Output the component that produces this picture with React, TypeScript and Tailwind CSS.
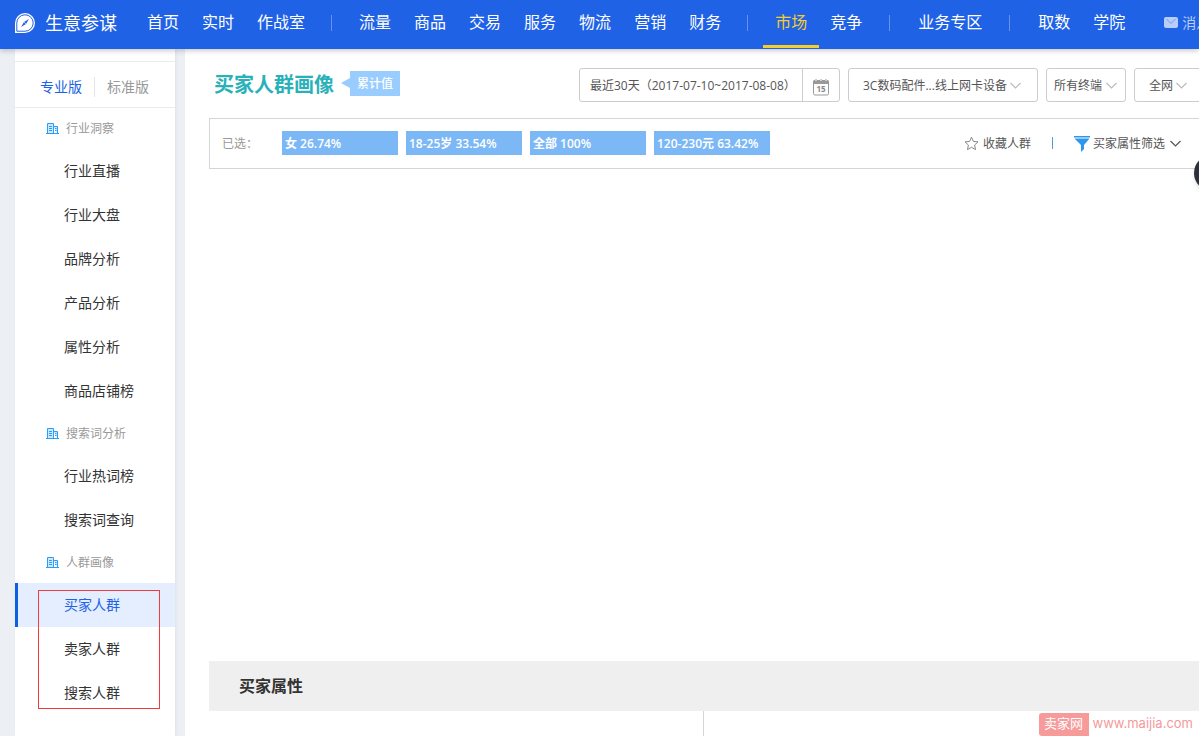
import type { ReactNode } from 'react';

type Group = { title: string; items: string[] };

const nav: { items: string[]; gap: string }[] = [
  { items: ['首页', '实时', '作战室'], gap: '' },
  { items: ['流量', '商品', '交易', '服务', '物流', '营销', '财务'], gap: 'mx-[15px]' },
  { items: ['市场', '竞争'], gap: 'mx-[15px]' },
  { items: ['业务专区'], gap: 'mx-4' },
  { items: ['取数', '学院'], gap: 'mx-4' },
];

const groups: Group[] = [
  { title: '行业洞察', items: ['行业直播', '行业大盘', '品牌分析', '产品分析', '属性分析', '商品店铺榜'] },
  { title: '搜索词分析', items: ['行业热词榜', '搜索词查询'] },
  { title: '人群画像', items: ['买家人群', '卖家人群', '搜索人群'] },
];

const chips = ['女 26.74%', '18-25岁 33.54%', '全部 100%', '120-230元 63.42%'];

function Logo() {
  return (
    <svg width="22" height="22" viewBox="0 0 22 22" className="shrink-0" aria-hidden="true">
      <path d="M1 21V11A10 10 0 1 1 11 21Z" fill="#fff" />
      <path d="M2.8 19.2V11A8.2 8.2 0 1 1 11 19.2Z" fill="none" stroke="#2062e6" strokeWidth="1" />
      <path d="M15 7 12 12 7 15 10 10Z" fill="#2062e6" />
      <path d="m10.4 10.4 1.2 1.2" stroke="#fff" />
    </svg>
  );
}

function BuildingIcon() {
  return (
    <svg width="13" height="12" viewBox="0 0 13 12" fill="none" stroke="#2a9dfa" aria-hidden="true">
      <path d="M1.5 10.5V.5h6v10" fill="#cfe8ff" />
      <path d="M7.5 3.5h4v7" fill="#cfe8ff" />
      <path d="M0 10.5h13M3 3.5h3M3 5.5h3M3 7.5h3M9 5.5h1.5M9 7.5h1.5" />
    </svg>
  );
}

function Chevron({ className = '' }: { className?: string }) {
  return (
    <svg width="11" height="7" viewBox="0 0 11 7" fill="none" stroke="currentColor" strokeWidth="1.2" className={className} aria-hidden="true">
      <path d="M.5 1 5.5 6l5-5" />
    </svg>
  );
}

function CalendarIcon() {
  return (
    <svg width="16" height="17" viewBox="0 0 16 17" aria-hidden="true">
      <path d="M0 2.5A1.5 1.5 0 0 1 1.5 1H2v2h2V1h3v2h2V1h3v2h2V1h.5A1.5 1.5 0 0 1 16 2.5V5H0Z" fill="#999" />
      <rect x=".5" y="2.5" width="15" height="13.5" rx="1.5" fill="none" stroke="#999" />
      <path d="M3 0v2M8 0v2M13 0v2" stroke="#999" />
      <text x="8" y="13" textAnchor="middle" fontSize="8" fontWeight="bold" fill="#888">15</text>
    </svg>
  );
}

function Picker({ label, value, box, text, arrow }: { label: string; value: string; box: string; text: string; arrow: string }) {
  return (
    <div className={`grid h-[34px] shrink-0 items-center rounded-[3px] border border-[#ccc] ${box}`}>
      <select aria-label={label} className={`col-start-1 row-start-1 h-full w-full appearance-none bg-transparent pt-px outline-none ${text}`}>
        <option>{value}</option>
      </select>
      <Chevron className={`pointer-events-none col-start-1 row-start-1 justify-self-end text-[#bbb] ${arrow}`} />
    </div>
  );
}

function NavLink({ active, children }: { active?: boolean; children: ReactNode }) {
  return (
    <a
      href="#"
      className={`-mr-px flex h-12 items-center border-b-[3px] px-3 pb-px ${active ? 'border-[#f5cd2e] text-[#f5cd2e]' : 'border-transparent'}`}
    >
      {children}
    </a>
  );
}

function Header() {
  return (
    <header className="relative z-10 flex h-[49px] items-start overflow-hidden bg-[#2062e6] pl-3.5 whitespace-nowrap text-white shadow-[0_2px_5px_rgba(0,0,0,0.2)]">
      <a href="#" className="flex h-[45px] w-[121px] shrink-0 items-center gap-[9px] text-lg">
        <Logo />
        生意参谋
      </a>
      <nav className="flex shrink-0 items-start text-base">
        {nav.map((g, i) => (
          <div key={i} className="flex">
            {i > 0 && <span className={`mt-[15px] h-4 w-px bg-[#6693ee] ${g.gap}`} />}
            {g.items.map((it) => (
              <NavLink key={it} active={it === '市场'}>{it}</NavLink>
            ))}
          </div>
        ))}
      </nav>
      <a href="#" className="ml-7 flex h-[45px] shrink-0 items-center gap-1 text-sm text-[#b8cdf7]">
        <svg width="14" height="11" viewBox="0 0 14 11" aria-hidden="true">
          <rect width="14" height="11" rx="2" fill="#b8cdf7" />
          <path d="M2.5 2 7 6.5 11.5 2" fill="none" stroke="#6f9bf0" />
        </svg>
        消息
      </a>
    </header>
  );
}

function Sidebar() {
  return (
    <aside className="relative w-40 shrink-0 bg-white pt-3 shadow-[1px_0_3px_rgba(80,100,140,0.1)]">
      <div className="flex h-[47px] items-center border-y border-[#ebebeb] pt-1 pl-[25px] text-sm">
        <button className="w-[54px] text-left text-[#2062e6]">专业版</button>
        <span className="h-5 w-px bg-[#e5e5e5]" />
        <button className="pl-3 text-[#999]">标准版</button>
      </div>
      {groups.map((g) => (
        <section key={g.title}>
          <h3 className="flex h-[41px] items-center gap-[7px] pl-[31px] text-xs text-[#999]">
            <BuildingIcon />
            {g.title}
          </h3>
          {g.items.map((it) => (
            <a
              key={it}
              href="#"
              className={`flex h-11 items-center border-l-[3px] pl-[46px] text-sm ${
                it === '买家人群' ? 'border-[#0b5fe0] bg-[#e5eeff] text-[#2062e6]' : 'border-transparent text-[#333]'
              }`}
            >
              {it}
            </a>
          ))}
        </section>
      ))}
      {/* highlight frame over the crowd links */}
      <div className="pointer-events-none absolute top-[541px] left-[23px] h-[119px] w-[122px] border border-[#f23c3c]" />
    </aside>
  );
}

function TitleRow() {
  return (
    <div className="flex h-[34px] items-center whitespace-nowrap">
      <h1 className="pl-[5px] text-xl font-bold text-[#29b1b9]">买家人群画像</h1>
      <div className="ml-[7px] flex shrink-0 items-center pb-1">
        <span className="border-y-[5px] border-r-[9px] border-y-transparent border-r-[#99ccff]" />
        <span className="flex h-[25px] w-[50px] items-center justify-center bg-[#99ccff] pt-0.5 text-xs font-medium text-white">累计值</span>
      </div>
      <div className="-mr-[3px] ml-auto flex shrink-0 gap-2 text-xs text-[#555]">
        <div className="flex h-[34px] w-[261px] rounded-[3px] border border-[#ccc]">
          <button className="flex-1 pt-px pl-2.5 text-left">最近30天（2017-07-10~2017-08-08）</button>
          <button aria-label="选择日期" className="flex w-[37px] items-center justify-center border-l border-[#ccc] pt-1">
            <CalendarIcon />
          </button>
        </div>
        <Picker label="类目" value="3C数码配件...线上网卡设备" box="w-[190px]" text="pl-3.5" arrow="mr-4" />
        <Picker label="终端" value="所有终端" box="w-20" text="pl-[7px]" arrow="mr-2" />
        <Picker label="范围" value="全网" box="w-[68px]" text="pl-3.5" arrow="mr-3.5" />
      </div>
    </div>
  );
}

function FilterBar() {
  return (
    <div className="mt-4 flex h-[51px] items-center border border-r-0 border-[#d5d5d5] pr-[18px] pb-px pl-3 text-xs whitespace-nowrap text-[#555]">
      <span className="w-[60px] shrink-0 pt-px text-[#999]">已选：</span>
      <ul className="flex gap-2">
        {chips.map((c) => (
          <li key={c} className="flex h-6 w-[116px] items-center bg-[#7cb8f5] pt-px pl-[3px] font-semibold text-white">{c}</li>
        ))}
      </ul>
      <button className="ml-auto flex items-center gap-1 pt-px">
        <svg width="15" height="15" viewBox="0 0 15 15" fill="none" stroke="#888" aria-hidden="true">
          <path d="M7.5 1.2 9.4 5.4 14 5.9 10.6 9 11.5 13.6 7.5 11.3 3.5 13.6 4.4 9 1 5.9 5.6 5.4Z" />
        </svg>
        收藏人群
      </button>
      <span className="mx-[21px] h-3 w-px bg-[#4a9be0]" />
      <button className="flex items-center gap-[3px] pt-px">
        <svg width="16" height="16" viewBox="0 0 16 16" fill="#2e96f0" aria-hidden="true">
          <path d="M0 0h16v1.5H0ZM.5 2.5h15L10 9v4l-3 3V9Z" />
        </svg>
        买家属性筛选
        <Chevron className="ml-0.5" />
      </button>
    </div>
  );
}

export default function App() {
  return (
    <div className="relative flex h-screen flex-col overflow-hidden bg-[#ecf0f5] font-['Open_Sans','Noto_Sans_CJK_SC',sans-serif]">
      <Header />
      <div className="flex flex-1 pl-[15px]">
        <Sidebar />
        <main className="ml-2.5 flex min-w-0 flex-1 flex-col bg-white pt-[19px] pl-6">
          <TitleRow />
          <FilterBar />
          <div className="h-[492px] shrink-0" />
          <h2 className="flex h-[50px] shrink-0 items-center bg-[#efefef] pl-[30px] text-base font-bold text-[#333]">买家属性</h2>
          <div className="flex-1">
            <div className="h-full w-1/2 border-r border-[#d5d5d5]" />
          </div>
        </main>
      </div>
      <button aria-label="客服" className="absolute top-[155px] -right-[31px] size-9 rounded-full bg-[#2b303b] shadow-md" />
      <div className="absolute right-1.5 bottom-0 flex h-6 items-center gap-1 text-[13px] text-[#f39a9a]">
        <span className="flex h-[23px] w-[50px] items-center justify-center rounded-l-[3px] bg-[#f69a9a] text-white">卖家网</span>
        <a href="#" className="font-['Inter',sans-serif]">www.maijia.com</a>
      </div>
    </div>
  );
}
